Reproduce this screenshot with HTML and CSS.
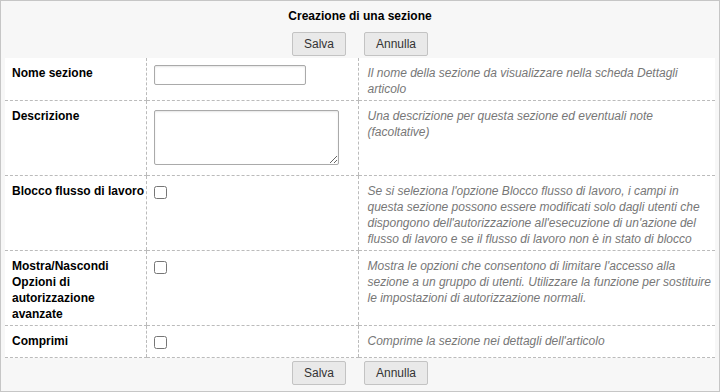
FILE: index.html
```html
<!DOCTYPE html>
<html lang="it">
<head>
    <meta charset="UTF-8">
    <meta name="viewport" content="width=device-width, initial-scale=1.0">
    <title>Creazione di una sezione</title>
    <link rel="stylesheet" href="styles.css">
</head>
<body>
    <div class="section-panel">
        <h1 class="panel-title">Creazione di una sezione</h1>
        <div class="button-bar">
            <button class="btn">Salva</button>
            <button class="btn">Annulla</button>
        </div>

        <table class="section-form">
            <colgroup>
                <col class="col-label">
                <col class="col-input">
                <col class="col-help">
            </colgroup>
            <tr class="row-name">
                <td class="field-label">Nome sezione</td>
                <td class="field-input"><input type="text" class="text-input"></td>
                <td class="field-help">Il nome della sezione da visualizzare nella scheda Dettagli articolo</td>
            </tr>
            <tr class="row-tall">
                <td class="field-label">Descrizione</td>
                <td class="field-input"><textarea class="text-area"></textarea></td>
                <td class="field-help">Una descrizione per questa sezione ed eventuali note (facoltative)</td>
            </tr>
            <tr class="row-tall">
                <td class="field-label">Blocco flusso di lavoro</td>
                <td class="field-input"><input type="checkbox" class="check"></td>
                <td class="field-help">Se si seleziona l'opzione Blocco flusso di lavoro, i campi in questa sezione possono essere modificati solo dagli utenti che dispongono dell'autorizzazione all'esecuzione di un'azione del flusso di lavoro e se il flusso di lavoro non è in stato di blocco</td>
            </tr>
            <tr class="row-tall">
                <td class="field-label">Mostra/Nascondi Opzioni di autorizzazione avanzate</td>
                <td class="field-input"><input type="checkbox" class="check"></td>
                <td class="field-help">Mostra le opzioni che consentono di limitare l'accesso alla sezione a un gruppo di utenti. Utilizzare la funzione per sostituire le impostazioni di autorizzazione normali.</td>
            </tr>
            <tr class="row-short">
                <td class="field-label">Comprimi</td>
                <td class="field-input"><input type="checkbox" class="check"></td>
                <td class="field-help">Comprime la sezione nei dettagli dell'articolo</td>
            </tr>
        </table>

        <div class="button-bar bottom">
            <button class="btn">Salva</button>
            <button class="btn">Annulla</button>
        </div>
    </div>
</body>
</html>
```

FILE: styles.css
```css
body {
    margin: 0;
    font-family: "Liberation Sans", Arial, sans-serif;
    font-size: 12px;
    color: #000;
}

.section-panel {
    width: 718px;
    height: 390px;
    border: 1px solid #c6c6c6;
    background-color: #f7f7f7;
}

.panel-title {
    margin: 0;
    padding-top: 8px;
    font-size: 12px;
    line-height: 14px;
    font-weight: bold;
    text-align: center;
}

.button-bar {
    display: flex;
    justify-content: center;
    gap: 18px;
    margin-top: 9px;
}

.button-bar.bottom {
    margin-top: 3px;
}

.btn {
    height: 24px;
    padding: 0 11px;
    font-family: "Liberation Sans", Arial, sans-serif;
    font-size: 12px;
    color: #333;
    background-color: #e9e9e9;
    border: 1px solid #c3c3c3;
    border-radius: 2px;
    cursor: pointer;
}

.section-form {
    width: 710px;
    margin: 2px 4px 0;
    background-color: #fff;
    border-collapse: collapse;
    table-layout: fixed;
}

.col-label { width: 141px; }
.col-input { width: 212px; }

.section-form td {
    vertical-align: top;
    border-bottom: 1px dashed #bbb;
    padding: 7px 0 2px 7px;
    line-height: 16px;
}

.section-form td + td {
    border-left: 1px dashed #bbb;
}

.row-name { height: 42px; }
.row-tall { height: 75px; }
.row-short { height: 32px; }

.field-label {
    font-weight: bold;
}

.field-help {
    color: #777;
    font-style: italic;
    padding-left: 9px !important;
    padding-right: 1px !important;
}

.text-input {
    display: block;
    width: 152px;
    height: 20px;
    margin: 0;
    box-sizing: border-box;
    border: 1px solid #aaa;
    border-radius: 2px;
    box-shadow: inset 0 1px 2px rgba(0, 0, 0, 0.1);
}

.text-area {
    display: block;
    width: 185px;
    height: 55px;
    margin: 2px 0 0;
    box-sizing: border-box;
    border: 1px solid #aaa;
    border-radius: 2px;
    box-shadow: inset 0 1px 2px rgba(0, 0, 0, 0.1);
}

.check {
    display: block;
    width: 13px;
    height: 13px;
    margin: 3px 0 0;
}
```
